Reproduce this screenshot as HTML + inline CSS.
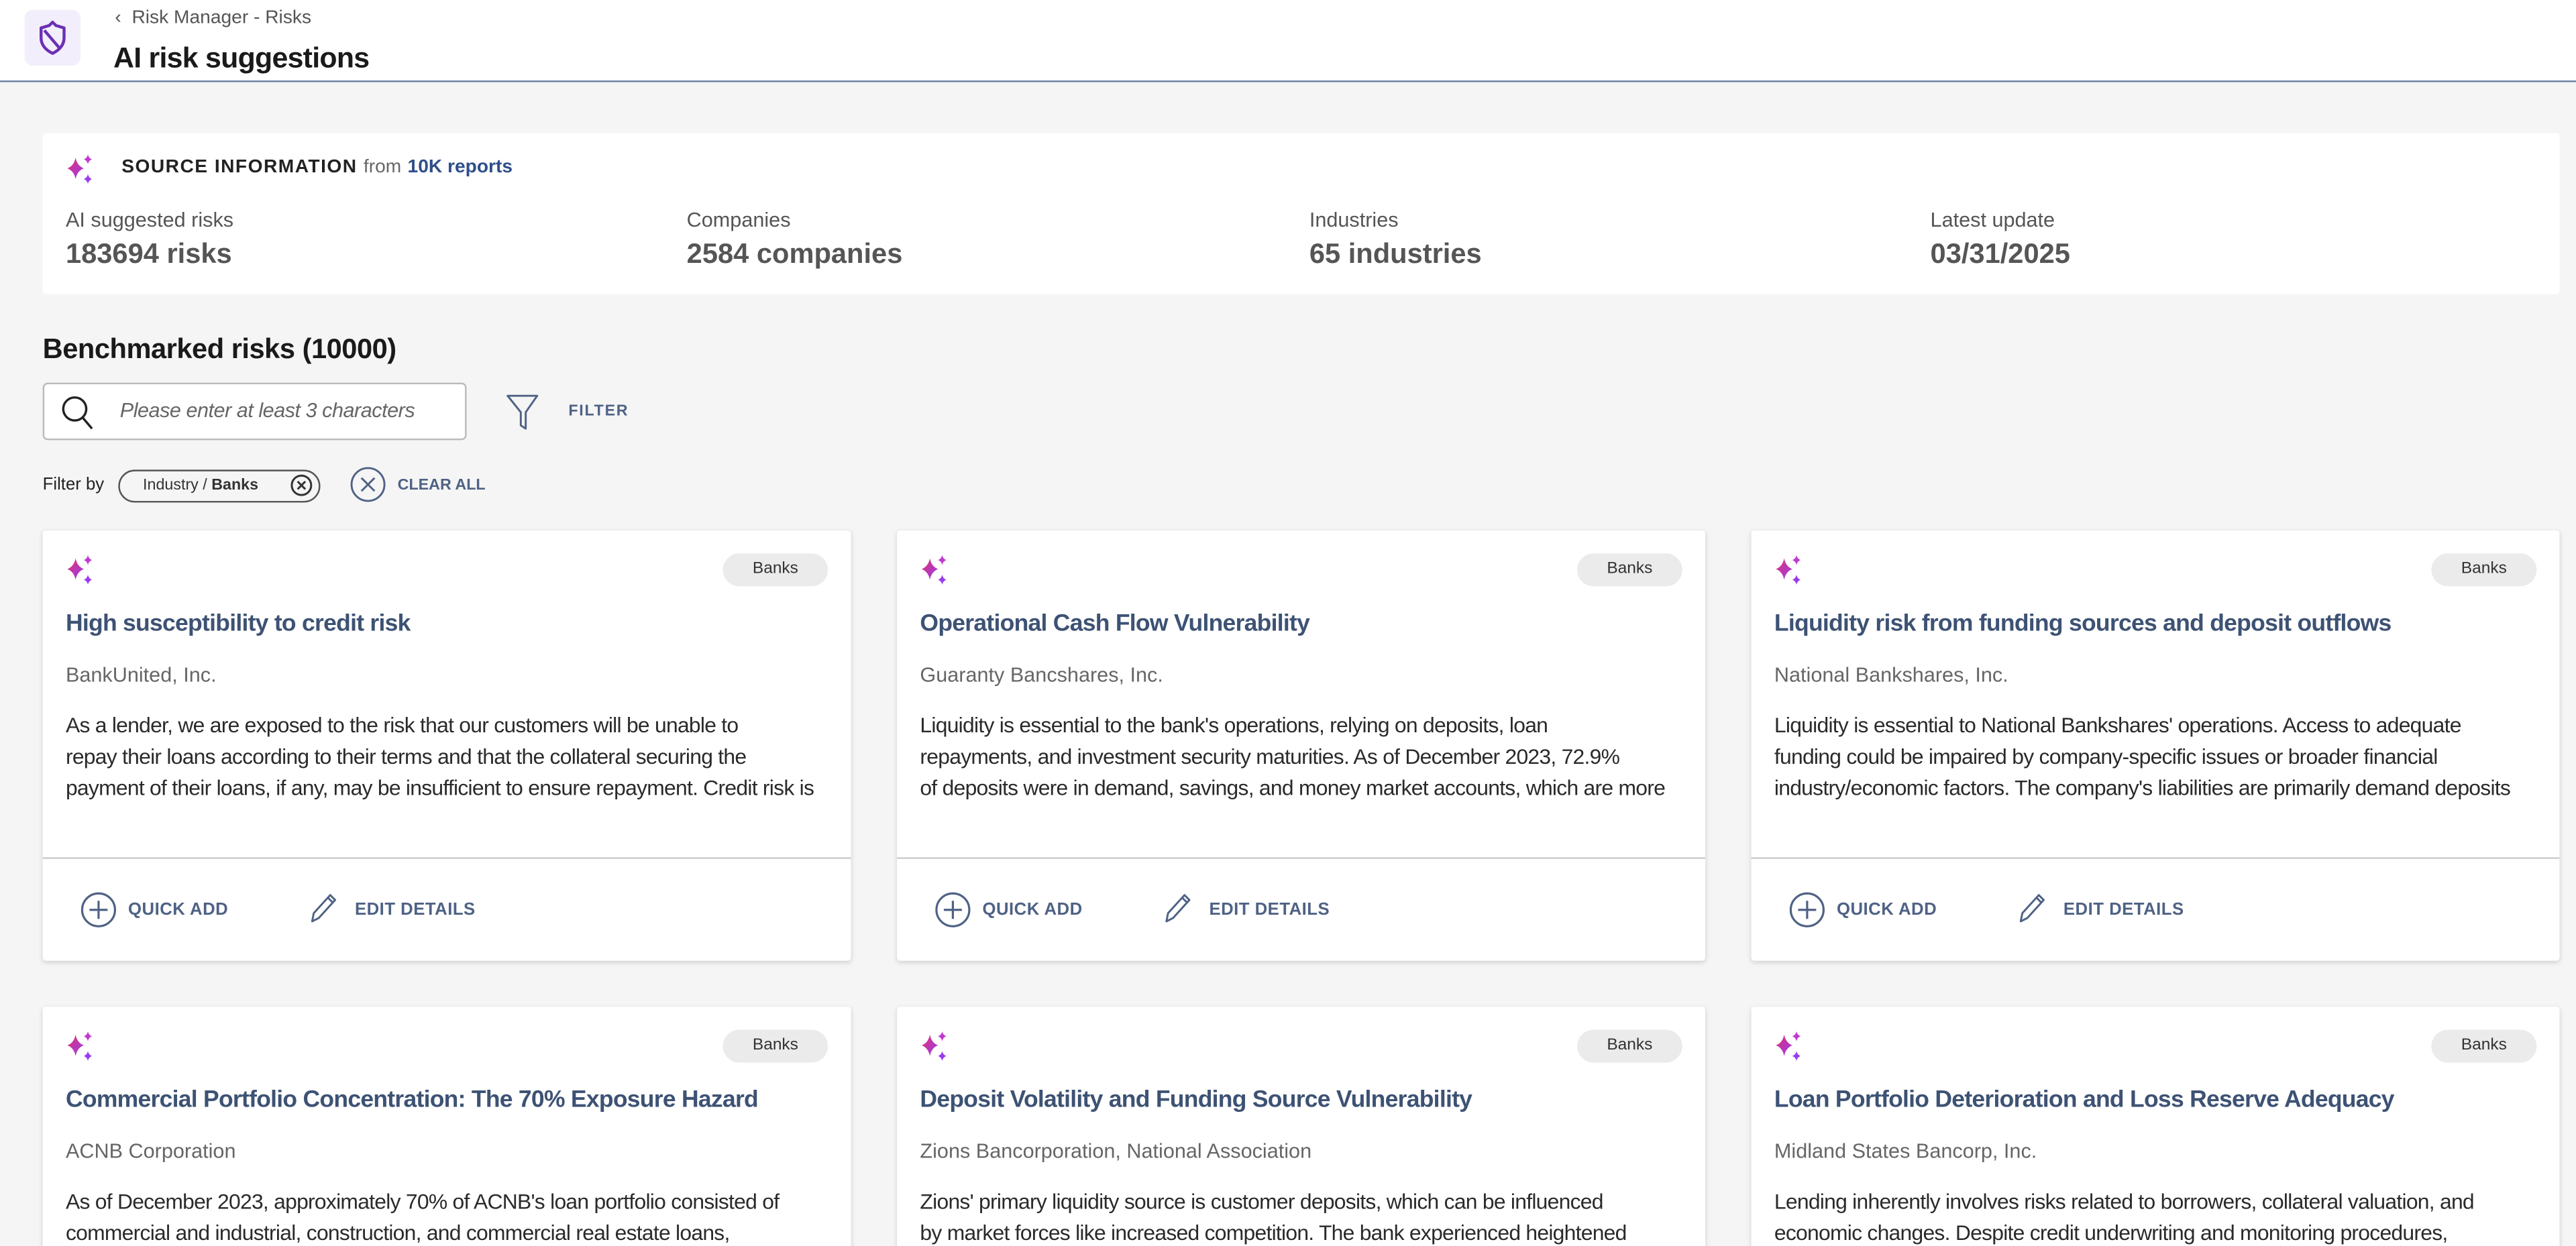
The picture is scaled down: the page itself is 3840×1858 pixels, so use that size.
<!DOCTYPE html>
<html><head><meta charset="utf-8"><style>
html,body{margin:0;padding:0;width:3840px;height:1858px;overflow:hidden;background:#f5f5f5}
#clip{position:relative;width:3840px;height:1858px;overflow:hidden}
#w{position:absolute;left:0;top:0;width:1568px;height:759px;overflow:hidden;transform:scale(2.44898);transform-origin:0 0;font-family:"Liberation Sans",sans-serif;color:#222}
.a{position:absolute;white-space:nowrap}
.hdr{position:absolute;left:0;top:0;width:1568px;height:49px;background:#fff;border-bottom:1.5px solid #6e82a3}
.card{position:absolute;background:#fff;box-shadow:0 1px 3px rgba(0,0,0,.15);border-radius:2px}
.rc{width:492px;height:262px}
.badge{position:absolute;right:14px;top:14px;width:64px;height:20px;border-radius:10px;background:#ebebeb;font-size:10px;text-align:center;line-height:20px;color:#333}
.t{position:absolute;left:14px;top:49px;font-size:14.5px;color:#3d5274;font-weight:bold;letter-spacing:-.3px;white-space:nowrap}
.co{position:absolute;left:14px;top:81px;font-size:12.5px;color:#666;white-space:nowrap}
.d{position:absolute;left:14px;top:109px;width:464px;font-size:13px;line-height:19px;color:#2a2a2a}
.d div{white-space:nowrap;overflow:hidden;text-overflow:ellipsis;letter-spacing:-.3px}
.hr{position:absolute;left:0;top:199px;width:100%;height:1px;background:#ccc}
.act{position:absolute;top:225px;font-size:10.5px;font-weight:bold;color:#4f6285;white-space:nowrap;letter-spacing:.2px}
</style></head><body><div id="clip"><div id="w">
<svg width="0" height="0" style="position:absolute"><defs>
<linearGradient id="g" x1="0" y1="0" x2="1" y2="1"><stop offset="0" stop-color="#e0336e"/><stop offset="1" stop-color="#9a3bf0"/></linearGradient>
<symbol id="sp" viewBox="0 0 20 20"><path d="M7 3 Q8 8 12 9.5 Q8 11 7 16 Q6 11 2 9.5 Q6 8 7 3Z" fill="url(#g)"/><path d="M14.5 1 Q15 3.3 17 4 Q15 4.7 14.5 7 Q14 4.7 12 4 Q14 3.3 14.5 1Z" fill="#c03ad0"/><path d="M14.5 13 Q15 15.3 17 16 Q15 16.7 14.5 19 Q14 16.7 12 16 Q14 15.3 14.5 13Z" fill="#9a3bf0"/></symbol>
<symbol id="qa" viewBox="0 0 22 22"><circle cx="11" cy="11" r="10" fill="none" stroke="#4f6285" stroke-width="1.3"/><path d="M11 5.5V16.5M5.5 11H16.5" stroke="#4f6285" stroke-width="1.3"/></symbol>
<symbol id="ed" viewBox="0 0 20 20"><path d="M3 18 L4 13 L14 2 L17 5 L7 16 Z M12.5 3.5 L15.5 6.5" fill="none" stroke="#4f6285" stroke-width="1.2" stroke-linejoin="round"/></symbol>
</defs></svg>

<div class="hdr">
<div class="a" style="left:15px;top:6px;width:34px;height:34px;border-radius:5px;background:#f3eefb"></div>
<svg class="a" style="left:23px;top:12px" width="18" height="22" viewBox="0 0 18 22"><path d="M9 1.5 L11 3.5 L16 5 L16 11 Q16 17 9 20.5 Q2 17 2 11 L2 5 L7 3.5 Z" fill="none" stroke="#6b2fb3" stroke-width="1.8" stroke-linejoin="round"/><path d="M4 6.5 L13 17" stroke="#6b2fb3" stroke-width="1.8"/></svg>
<div class="a" style="left:70px;top:5px;font-size:11.5px;color:#555">‹&nbsp; Risk Manager - Risks</div>
<div class="a" style="left:69px;top:25px;font-size:17.5px;font-weight:bold;color:#1a1a1a;letter-spacing:-.3px">AI risk suggestions</div>
</div>

<div class="card" style="left:26px;top:81px;width:1532px;height:98px;box-shadow:none">
<svg class="a" style="left:13px;top:12px" width="20" height="20"><use href="#sp"/></svg>
<div class="a" style="left:48px;top:15px;font-size:11.5px;letter-spacing:.6px;color:#222;font-weight:bold">SOURCE INFORMATION <span style="font-weight:normal;letter-spacing:0;color:#666">from</span> <span style="letter-spacing:0;color:#2f4f8a">10K reports</span></div>
<div class="a" style="left:14px;top:46px;font-size:12.5px;color:#555">AI suggested risks</div>
<div class="a" style="left:14px;top:64px;font-size:17px;font-weight:bold;color:#555">183694 risks</div>
<div class="a" style="left:392px;top:46px;font-size:12.5px;color:#555">Companies</div>
<div class="a" style="left:392px;top:64px;font-size:17px;font-weight:bold;color:#555">2584 companies</div>
<div class="a" style="left:771px;top:46px;font-size:12.5px;color:#555">Industries</div>
<div class="a" style="left:771px;top:64px;font-size:17px;font-weight:bold;color:#555">65 industries</div>
<div class="a" style="left:1149px;top:46px;font-size:12.5px;color:#555">Latest update</div>
<div class="a" style="left:1149px;top:64px;font-size:17px;font-weight:bold;color:#555">03/31/2025</div>
</div>

<div class="a" style="left:26px;top:203px;font-size:17px;font-weight:bold;color:#1a1a1a;letter-spacing:-.2px">Benchmarked risks (10000)</div>
<div class="a" style="left:26px;top:233px;width:256px;height:33px;border:1px solid #bbb;border-radius:3px;background:#fff"></div>
<svg class="a" style="left:36px;top:239px" width="24" height="24" viewBox="0 0 24 24"><circle cx="9.5" cy="10" r="7" fill="none" stroke="#222" stroke-width="1.4"/><path d="M14.5 15.5 L20 22" stroke="#222" stroke-width="1.4"/></svg>
<div class="a" style="left:73px;top:243px;font-size:12.5px;font-style:italic;color:#666;letter-spacing:-.2px">Please enter at least 3 characters</div>
<svg class="a" style="left:307px;top:239px" width="24" height="24" viewBox="0 0 24 24"><path d="M2 2 H20 L13 12 V22 L10 20 V12 Z" fill="none" stroke="#4f6285" stroke-width="1.2" stroke-linejoin="round"/></svg>
<div class="a" style="left:346px;top:245px;font-size:9.5px;font-weight:bold;color:#4f6285;letter-spacing:.7px">FILTER</div>

<div class="a" style="left:26px;top:289px;font-size:10.5px;color:#222">Filter by</div>
<div class="a" style="left:72px;top:286px;width:121px;height:18px;border:1px solid #555;border-radius:10px"></div>
<div class="a" style="left:87px;top:290px;font-size:9.5px;color:#333">Industry / <b>Banks</b></div>
<svg class="a" style="left:176px;top:288px" width="15" height="15" viewBox="0 0 16 16"><circle cx="8" cy="8" r="6.3" fill="none" stroke="#333" stroke-width="1.3"/><path d="M5.5 5.5L10.5 10.5M10.5 5.5L5.5 10.5" stroke="#333" stroke-width="1.3"/></svg>
<svg class="a" style="left:213px;top:284px" width="22" height="22" viewBox="0 0 22 22"><circle cx="11" cy="11" r="10" fill="none" stroke="#4f6285" stroke-width="1.2"/><path d="M7 7L15 15M15 7L7 15" stroke="#4f6285" stroke-width="1.2"/></svg>
<div class="a" style="left:242px;top:290px;font-size:9.5px;font-weight:bold;color:#4f6285">CLEAR ALL</div>

<div class="card rc" style="left:26px;top:323px">
<svg class="a" style="left:13px;top:14px" width="20" height="20"><use href="#sp"/></svg><div class="badge">Banks</div>
<div class="t">High susceptibility to credit risk</div><div class="co">BankUnited, Inc.</div>
<div class="d"><div>As a lender, we are exposed to the risk that our customers will be unable to</div><div>repay their loans according to their terms and that the collateral securing the</div><div>payment of their loans, if any, may be insufficient to ensure repayment. Credit risk is</div></div>
<div class="hr"></div>
<svg class="a" style="left:23px;top:220px" width="22" height="22"><use href="#qa"/></svg><div class="act" style="left:52px">QUICK ADD</div>
<svg class="a" style="left:161px;top:220px" width="20" height="20"><use href="#ed"/></svg><div class="act" style="left:190px">EDIT DETAILS</div>
</div>
<div class="card rc" style="left:546px;top:323px">
<svg class="a" style="left:13px;top:14px" width="20" height="20"><use href="#sp"/></svg><div class="badge">Banks</div>
<div class="t">Operational Cash Flow Vulnerability</div><div class="co">Guaranty Bancshares, Inc.</div>
<div class="d"><div>Liquidity is essential to the bank's operations, relying on deposits, loan</div><div>repayments, and investment security maturities. As of December 2023, 72.9%</div><div>of deposits were in demand, savings, and money market accounts, which are more</div></div>
<div class="hr"></div>
<svg class="a" style="left:23px;top:220px" width="22" height="22"><use href="#qa"/></svg><div class="act" style="left:52px">QUICK ADD</div>
<svg class="a" style="left:161px;top:220px" width="20" height="20"><use href="#ed"/></svg><div class="act" style="left:190px">EDIT DETAILS</div>
</div>
<div class="card rc" style="left:1066px;top:323px">
<svg class="a" style="left:13px;top:14px" width="20" height="20"><use href="#sp"/></svg><div class="badge">Banks</div>
<div class="t">Liquidity risk from funding sources and deposit outflows</div><div class="co">National Bankshares, Inc.</div>
<div class="d"><div>Liquidity is essential to National Bankshares' operations. Access to adequate</div><div>funding could be impaired by company-specific issues or broader financial</div><div>industry/economic factors. The company's liabilities are primarily demand deposits</div></div>
<div class="hr"></div>
<svg class="a" style="left:23px;top:220px" width="22" height="22"><use href="#qa"/></svg><div class="act" style="left:52px">QUICK ADD</div>
<svg class="a" style="left:161px;top:220px" width="20" height="20"><use href="#ed"/></svg><div class="act" style="left:190px">EDIT DETAILS</div>
</div>

<div class="card" style="left:26px;top:613px;width:492px;height:160px">
<svg class="a" style="left:13px;top:14px" width="20" height="20"><use href="#sp"/></svg><div class="badge">Banks</div>
<div class="t">Commercial Portfolio Concentration: The 70% Exposure Hazard</div><div class="co">ACNB Corporation</div>
<div class="d"><div>As of December 2023, approximately 70% of ACNB's loan portfolio consisted of</div><div>commercial and industrial, construction, and commercial real estate loans,</div></div>
</div>
<div class="card" style="left:546px;top:613px;width:492px;height:160px">
<svg class="a" style="left:13px;top:14px" width="20" height="20"><use href="#sp"/></svg><div class="badge">Banks</div>
<div class="t">Deposit Volatility and Funding Source Vulnerability</div><div class="co">Zions Bancorporation, National Association</div>
<div class="d"><div>Zions' primary liquidity source is customer deposits, which can be influenced</div><div>by market forces like increased competition. The bank experienced heightened</div></div>
</div>
<div class="card" style="left:1066px;top:613px;width:492px;height:160px">
<svg class="a" style="left:13px;top:14px" width="20" height="20"><use href="#sp"/></svg><div class="badge">Banks</div>
<div class="t">Loan Portfolio Deterioration and Loss Reserve Adequacy</div><div class="co">Midland States Bancorp, Inc.</div>
<div class="d"><div>Lending inherently involves risks related to borrowers, collateral valuation, and</div><div>economic changes. Despite credit underwriting and monitoring procedures,</div></div>
</div>
</div></div></body></html>
